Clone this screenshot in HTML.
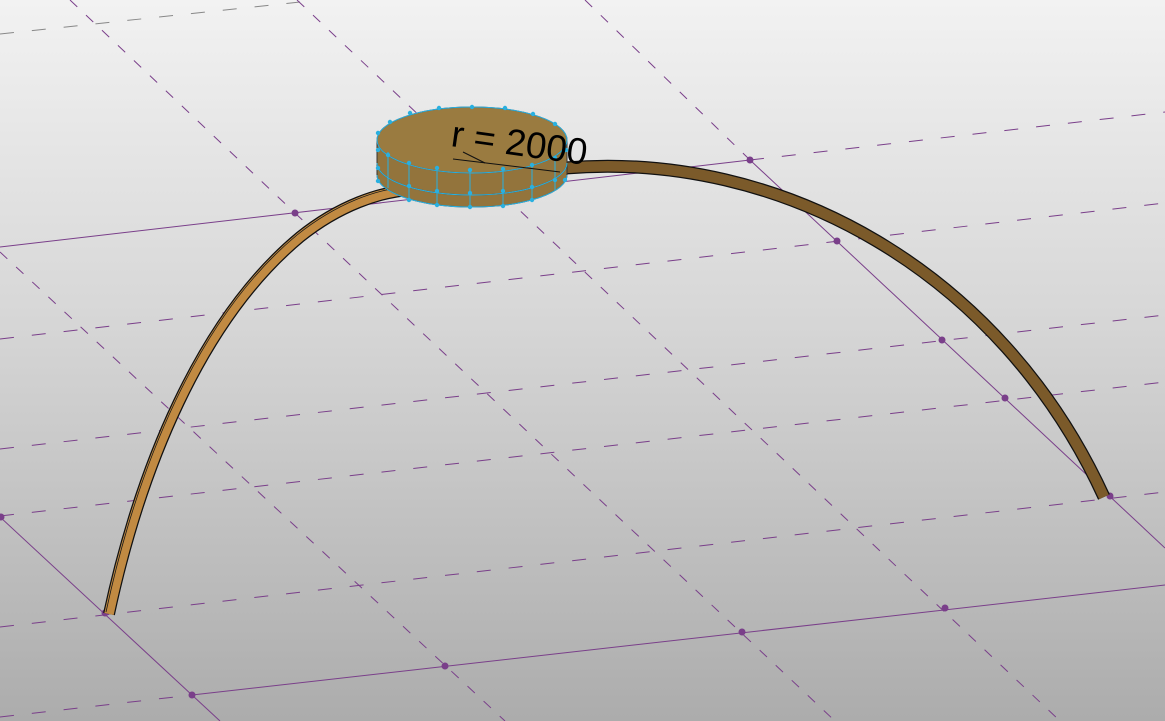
<!DOCTYPE html>
<html><head><meta charset="utf-8"><style>
html,body{margin:0;padding:0;overflow:hidden}
svg{display:block}
</style></head><body>
<svg width="1165" height="721" viewBox="0 0 1165 721" xmlns="http://www.w3.org/2000/svg">
<defs>
<linearGradient id="bg" x1="0" y1="0" x2="0" y2="1">
<stop offset="0" stop-color="#f2f2f2"/>
<stop offset="0.45" stop-color="#d6d6d6"/>
<stop offset="1" stop-color="#acacac"/>
</linearGradient>
</defs>
<rect width="1165" height="721" fill="url(#bg)"/>
<g stroke="#7a3f8a" stroke-width="1" fill="none">
<line x1="0" y1="34" x2="300" y2="2" stroke="#888" stroke-dasharray="14,18"/>
<line x1="0" y1="247" x2="750" y2="160"/>
<line x1="750" y1="160" x2="1165" y2="112" stroke-dasharray="14,18"/>
<line x1="0" y1="339" x2="1165" y2="203" stroke-dasharray="14,18"/>
<line x1="0" y1="449" x2="1165" y2="315" stroke-dasharray="14,18"/>
<line x1="0" y1="516" x2="1165" y2="382" stroke-dasharray="14,18"/>
<line x1="0" y1="627" x2="1165" y2="492" stroke-dasharray="14,18"/>
<line x1="0" y1="717" x2="192" y2="695" stroke-dasharray="14,18"/>
<line x1="192" y1="695" x2="1165" y2="585"/>
<line x1="70" y1="0" x2="295" y2="213" stroke-dasharray="10,12"/>
<line x1="295" y1="213" x2="835" y2="721" stroke-dasharray="10,12"/>
<line x1="0" y1="252" x2="505" y2="721" stroke-dasharray="10,12"/>
<line x1="0" y1="517" x2="220" y2="721"/>
<line x1="297" y1="0" x2="1060" y2="721" stroke-dasharray="10,12"/>
<line x1="585" y1="0" x2="750" y2="160" stroke-dasharray="10,12"/>
<line x1="750" y1="160" x2="1165" y2="548"/>
</g>
<g fill="#7a3f8a">
<circle cx="295" cy="213" r="3.5"/><circle cx="750" cy="160" r="3.5"/>
<circle cx="837" cy="241" r="3.5"/><circle cx="942" cy="340" r="3.5"/>
<circle cx="1005" cy="398" r="3.5"/><circle cx="1110" cy="496" r="3.5"/>
<circle cx="1" cy="517" r="3.5"/><circle cx="105" cy="613" r="3.5"/>
<circle cx="192" cy="695" r="3.5"/><circle cx="445" cy="666" r="3.5"/>
<circle cx="742" cy="632" r="3.5"/><circle cx="945" cy="608" r="3.5"/>
</g>
<!-- left arch -->
<path d="M109,614 C140,470 200,320 300,237 C340,205 380,192 410,190" stroke="#111" stroke-width="12" fill="none"/>
<path d="M109,614 C140,470 200,320 300,237 C340,205 380,192 410,190" stroke="#c18a42" stroke-width="9.5" fill="none"/>
<path d="M106,612 C137,468 197,318 297,235 C337,203 377,189 407,187" stroke="#1a1a1a" stroke-width="0.8" fill="none"/>
<!-- right arch -->
<path d="M565,168 C780,150 1000,270 1104,497" stroke="#111" stroke-width="13" fill="none"/>
<path d="M565,168 C780,150 1000,270 1104,497" stroke="#7b5a2a" stroke-width="10.5" fill="none"/>
<!-- disk -->
<path d="M377,140 L377,175 A95,32 0 0 0 567,175 L567,140 Z" fill="#93743c" stroke="#333" stroke-width="1"/>
<ellipse cx="472" cy="140" rx="95" ry="33" fill="#9a7b40" stroke="#444" stroke-width="1"/>
<path d="M377,163 A95,32 0 0 0 567,163" fill="none" stroke="#333" stroke-width="1"/>
<g stroke="#29b0e0" stroke-width="1" fill="none">
<ellipse cx="472" cy="140" rx="95" ry="33"/>
<path d="M377,175 A95,32 0 0 0 567,175"/>
<path d="M377,163 A95,32 0 0 0 567,163"/>
<line x1="409" y1="163" x2="409" y2="200"/><line x1="437" y1="168" x2="437" y2="205"/>
<line x1="470" y1="170" x2="470" y2="207"/><line x1="503" y1="169" x2="503" y2="206"/>
<line x1="532" y1="165" x2="532" y2="200"/><line x1="555" y1="158" x2="555" y2="190"/>
<line x1="388" y1="152" x2="388" y2="188"/>
</g>
<g fill="#29b0e0">
<circle cx="410" cy="113" r="2.2"/><circle cx="439" cy="108" r="2.2"/><circle cx="472" cy="107" r="2.2"/>
<circle cx="505" cy="108" r="2.2"/><circle cx="533" cy="114" r="2.2"/><circle cx="555" cy="124" r="2.2"/>
<circle cx="390" cy="122" r="2.2"/><circle cx="378" cy="133" r="2.2"/><circle cx="378" cy="150" r="2.2"/>
<circle cx="378" cy="168" r="2.2"/><circle cx="378" cy="181" r="2.2"/>
<circle cx="388" cy="155" r="2.2"/><circle cx="409" cy="163" r="2.2"/><circle cx="437" cy="168" r="2.2"/>
<circle cx="470" cy="170" r="2.2"/><circle cx="503" cy="169" r="2.2"/><circle cx="532" cy="165" r="2.2"/>
<circle cx="555" cy="158" r="2.2"/><circle cx="566" cy="150" r="2.2"/>
<circle cx="409" cy="186" r="2.2"/><circle cx="437" cy="191" r="2.2"/><circle cx="470" cy="193" r="2.2"/>
<circle cx="503" cy="191" r="2.2"/><circle cx="532" cy="187" r="2.2"/><circle cx="555" cy="180" r="2.2"/>
<circle cx="409" cy="200" r="2.2"/><circle cx="437" cy="205" r="2.2"/><circle cx="470" cy="207" r="2.2"/>
<circle cx="503" cy="206" r="2.2"/><circle cx="532" cy="200" r="2.2"/><circle cx="565" cy="180" r="2.2"/>
</g>
<g stroke="#111" stroke-width="1">
<line x1="453" y1="159" x2="560" y2="172"/>
<line x1="463" y1="152" x2="485" y2="163"/>
</g>
<text x="450" y="146" font-family="Liberation Sans, sans-serif" font-size="37" fill="#000" transform="rotate(8 450 146)">r = 2000</text>
</svg>
</body></html>
